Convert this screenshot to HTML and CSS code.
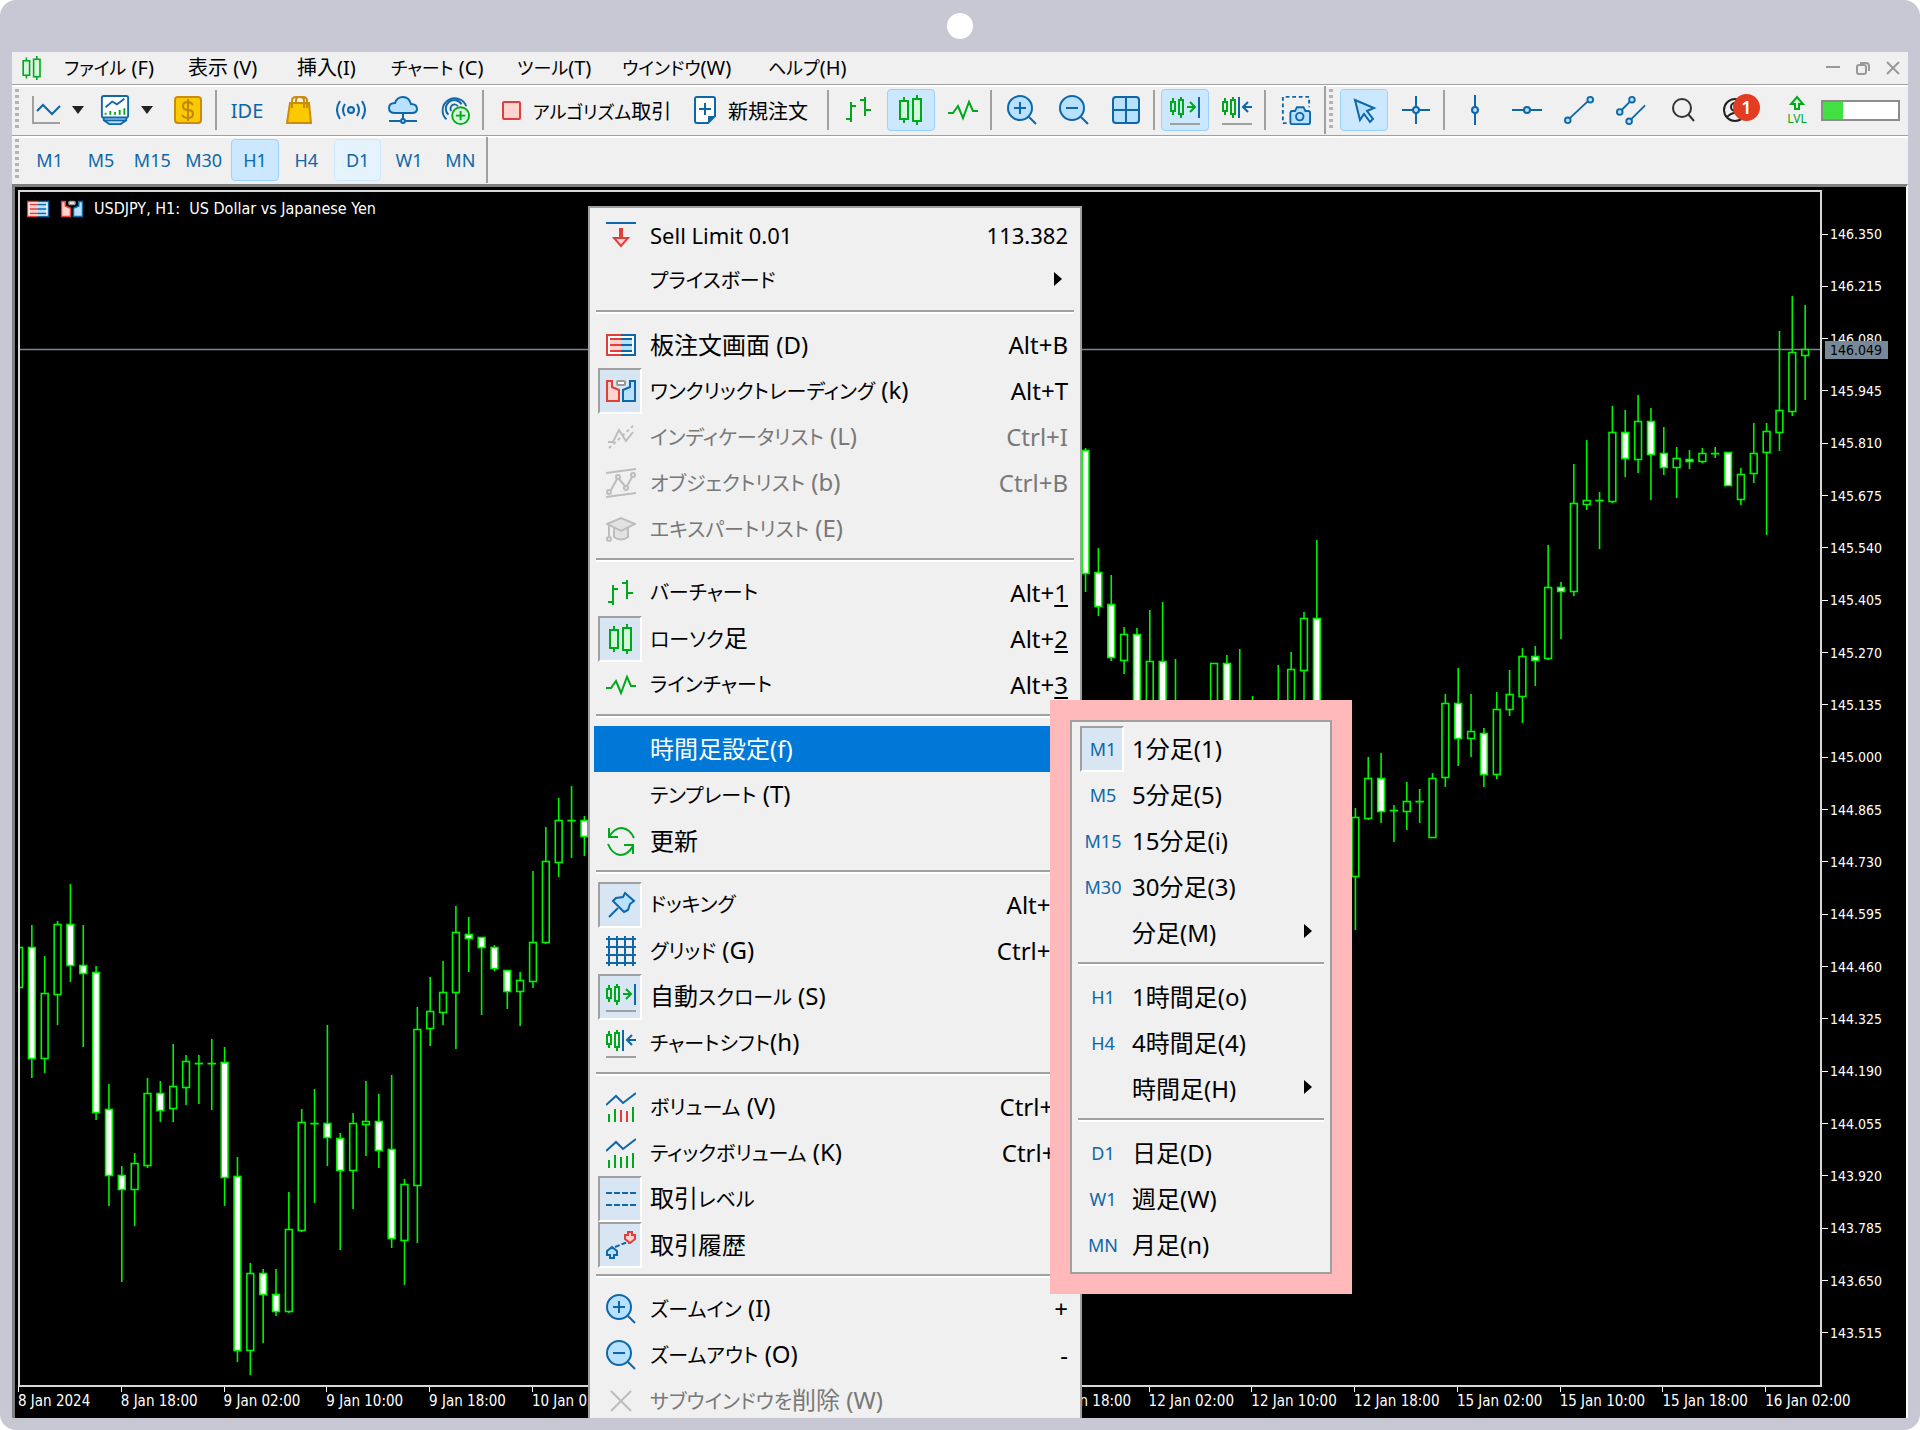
FILE: index.html
```html
<!DOCTYPE html>
<html lang="ja">
<head>
<meta charset="utf-8">
<title>USDJPY, H1</title>
<link rel="stylesheet" href="styles.css">
</head>
<body>
<svg class="sprite" aria-hidden="true">
  <defs>
    <symbol id="i-bars" viewBox="0 0 30 30"><path class="s-green" d="M2 24h6M7 27V7M7 11h5M16 5h6M21 2v19M21 15h6"/></symbol>
    <symbol id="i-candles" viewBox="0 0 30 30"><path class="s-green" d="M8 2v4M8 24v4M21 0v4M21 26v4"/><path class="s-green f-green" d="M4 6h8v18H4zM17 4h8v22h-8z"/></symbol>
    <symbol id="i-pulse" viewBox="0 0 30 30"><path class="s-green" d="M0 18h5l5-7 5 12 6-16 4 9h5"/></symbol>
    <symbol id="i-zoomin" viewBox="0 0 30 30"><circle class="s-blue f-blue" cx="13" cy="13" r="12"/><path class="s-blue" d="M13 7v12M7 13h12M22 22l7 7"/></symbol>
    <symbol id="i-zoomout" viewBox="0 0 30 30"><circle class="s-blue f-blue" cx="13" cy="13" r="12"/><path class="s-blue" d="M7 13h12M22 22l7 7"/></symbol>
    <symbol id="i-scroll" viewBox="0 0 30 30"><path class="s-green" d="M3 3v4M3 16v4M11 2v3M11 19v4M1 7h4v9H1zM9 5h4v14H9zM17 12h8M20 7l5 5-5 5"/><path class="s-blue" d="M29 2v21"/><path class="s-gray" d="M0 29h30"/></symbol>
    <symbol id="i-shift" viewBox="0 0 30 30"><path class="s-green" d="M3 3v4M3 16v4M11 2v3M11 19v4M1 7h4v9H1zM9 5h4v14H9z"/><path class="s-blue" d="M17 2v21M30 12h-8M26 7l-5 5 5 5"/><path class="s-gray" d="M0 29h30"/></symbol>
    <symbol id="i-dom" viewBox="0 0 30 24"><path class="s-red" fill="#fff" d="M15 2H1v20h14"/><path class="s-blue" fill="#fff" d="M15 2h14v20H15"/><path class="fill-red" d="M4 5h11v14H4z"/><path class="fill-blue" d="M15 5h11v14H15z"/><path class="s-red" d="M4 6h11M4 12h11M4 18h11"/><path class="s-blue" d="M15 6h11M15 12h11M15 18h11"/></symbol>
    <symbol id="i-oneclick" viewBox="0 0 30 24"><path class="s-red f-red" d="M1 2h5v6l7 3v11H1z"/><path class="s-blue f-blue" d="M29 2h-5v6l-7 3v11h12z"/><rect x="11" y="2" width="8" height="4" rx="1" fill="#fff" stroke="#999" stroke-width="2"/></symbol>
    <symbol id="i-selllimit" viewBox="0 0 30 28"><path class="s-blue" d="M0 2h30"/><path class="s-red f-red" d="M14 8h2v9h6l-7 8-7-8h6z"/></symbol>
    <symbol id="i-indi" viewBox="0 0 30 30"><path class="s-lgray" d="M2 20h5l6-12 7 11 7-9"/><path class="s-lgray" stroke-dasharray="3 3" d="M3 26L27 4"/></symbol>
    <symbol id="i-objects" viewBox="0 0 30 30"><path class="s-lgray" d="M0 5l30-4M0 29l30-4M5 22l6-11M13 11l6 7M21 18l5-9"/><g class="s-lgray"><circle cx="3" cy="24" r="2"/><circle cx="12" cy="9" r="2"/><circle cx="20" cy="20" r="2"/><circle cx="27" cy="7" r="2"/></g></symbol>
    <symbol id="i-expert" viewBox="0 0 30 30"><path class="s-lgray f-lgray" d="M8 13v10q7 5 14 0V13"/><path class="s-lgray f-lgray" d="M1 10l14-6 14 6-14 7z"/><path class="s-lgray" d="M3 11v13"/><circle class="s-lgray" cx="3" cy="25" r="2"/></symbol>
    <symbol id="i-refresh" viewBox="0 0 30 30"><path class="s-green" d="M3 11Q8 2 16 2q8 1 12 10M3 2v9h9M27 20q-5 9-13 9Q6 28 2 18M27 28v-9h-9"/></symbol>
    <symbol id="i-pin" viewBox="0 0 30 30"><path class="s-blue f-blue" d="M19 3l9 8-4 3-2 6-4 2-5-5-6-6 3-3 7-1z"/><path class="s-blue" d="M12 18L3 27"/></symbol>
    <symbol id="i-grid" viewBox="0 0 30 30"><path class="s-blue" d="M3 0v30M11 0v30M19 0v30M27 0v30M0 3h30M0 11h30M0 19h30M0 27h30"/></symbol>
    <symbol id="i-volume" viewBox="0 0 30 30"><path class="s-blue" d="M0 13l10-9 7 7L30 1"/><path class="s-green" d="M3 30v-8M9 30V17M27 30V15"/><path class="s-red" d="M15 30V18M21 30V19"/></symbol>
    <symbol id="i-tick" viewBox="0 0 30 30"><path class="s-blue" d="M0 13l10-9 7 7L30 1"/><path class="s-green" d="M3 30v-8M9 30V17M15 30V19M21 30V18M27 30V15"/></symbol>
    <symbol id="i-levels" viewBox="0 0 30 30"><path class="s-blue" stroke-dasharray="6 2" d="M0 9h30M0 21h30"/></symbol>
    <symbol id="i-history" viewBox="0 0 30 30"><path class="s-blue" stroke-dasharray="5 2" d="M9 17l10-4h4"/><path class="s-red f-red" d="M22 2h4v3h3v4l-5 4-5-4V5h3z"/><path class="s-blue f-blue" d="M6 17l5 4v4H8v3H4v-3H1v-4z"/></symbol>
    <symbol id="i-delete" viewBox="0 0 30 30"><path class="s-lgray" d="M5 5l20 20M25 5L5 25"/></symbol>
    <symbol id="i-line" viewBox="0 0 30 30"><path class="s-gray" d="M2 1v27h27"/><path class="s-blue" d="M6 16l6-6 9 9 8-8"/></symbol>
    <symbol id="i-template" viewBox="0 0 32 32"><path class="s-blue f-blue" d="M4 21v6l6 4h12l6-4v-6M4 27h24"/><rect x="2" y="1" width="28" height="23" rx="2" fill="#fff" class="s-blue"/><path class="s-blue" d="M6 13l7-6 5 3 8-6"/><path class="s-green" d="M6 21v-2M11 21v-4M16 21v-3M21 21v-5M26 21v-7"/></symbol>
    <symbol id="i-dollar" viewBox="0 0 30 30"><rect x="2" y="2" width="26" height="26" rx="3" fill="#fbc900" stroke="#c98d0c" stroke-width="2"/><path fill="none" stroke="#c0860a" stroke-width="2" d="M20 10q-2-3-5-3-5 0-5 4t5 4 5 4-5 4q-4 0-6-3M15 4v22"/></symbol>
    <symbol id="i-bag" viewBox="0 0 30 30"><path fill="#fbc900" stroke="#c98d0c" stroke-width="2" d="M6 8h19l2 20H3z"/><path fill="none" stroke="#c98d0c" stroke-width="2" d="M8 13V6q0-4 4-4h4q4 0 4 4v7M12 8V6q0-4 3-4M23 13V6q0-4-4-4h-3"/></symbol>
    <symbol id="i-signal" viewBox="0 0 30 30"><circle class="s-blue f-blue" cx="15" cy="15" r="3"/><path class="s-blue" d="M9 9q-4 6 0 12M21 9q4 6 0 12M4 6q-6 9 0 18M26 6q6 9 0 18"/></symbol>
    <symbol id="i-cloud" viewBox="0 0 30 30"><path class="s-blue f-blue" d="M7 18Q1 18 1 13t6-5q2-6 8-6t8 7q6 0 6 5 0 4-5 4z"/><path class="s-blue" d="M15 18v6M1 26h11M18 26h11"/><circle class="s-blue f-blue" cx="15" cy="26" r="2"/></symbol>
    <symbol id="i-vps" viewBox="0 0 32 32"><path class="s-blue" d="M7 26A13 13 0 1 1 28 12M9 21A9 9 0 1 1 23 10M12 17a4 4 0 1 1 7-5"/><circle class="s-green f-green" cx="22" cy="22" r="9"/><path class="s-green" d="M22 17v10M17 22h10"/></symbol>
    <symbol id="i-neworder" viewBox="0 0 22 28"><path class="s-blue" fill="#fff" d="M3 1h16q2 0 2 2v17l-7 7H3q-2 0-2-2V3q0-2 2-2z"/><path fill="#0e67a8" d="M14 27v-7h7z"/><path class="s-blue" d="M11 7v12M5 13h12"/></symbol>
    <symbol id="i-tile" viewBox="0 0 30 30"><rect class="s-blue f-blue" x="2" y="2" width="26" height="26" rx="3"/><path class="s-blue" d="M15 2v26M2 15h26"/></symbol>
    <symbol id="i-camera" viewBox="0 0 32 32"><path class="s-blue" stroke-dasharray="4 3" d="M6 30H2V2h28v11"/><path class="s-blue f-blue" d="M11 17h4l2-4h7l2 4h3q2 0 2 2v10q0 2-2 2H12q-2 0-2-2V19z"/><circle class="s-blue" cx="20" cy="23" r="4"/></symbol>
    <symbol id="i-cursor" viewBox="0 0 30 30"><path class="s-blue f-blue" d="M6 5l19 8-7 3 6 8-3 3-6-8-4 6z"/></symbol>
    <symbol id="i-cross" viewBox="0 0 30 30"><path class="s-blue" d="M15 1v11M15 18v11M1 15h11M18 15h11"/><circle class="s-blue f-blue" cx="15" cy="15" r="3"/></symbol>
    <symbol id="i-vline" viewBox="0 0 30 30"><path class="s-blue" d="M15 0v12M15 18v12"/><circle class="s-blue f-blue" cx="15" cy="15" r="3"/></symbol>
    <symbol id="i-hline" viewBox="0 0 30 30"><path class="s-blue" d="M0 15h12M18 15h12"/><circle class="s-blue f-blue" cx="15" cy="15" r="3"/></symbol>
    <symbol id="i-trend" viewBox="0 0 32 32"><path class="s-blue" d="M6 25L25 7"/><circle class="s-blue f-blue" cx="4" cy="27" r="3"/><circle class="s-blue f-blue" cx="28" cy="5" r="3"/></symbol>
    <symbol id="i-channel" viewBox="0 0 32 32"><path class="s-blue" d="M6 16L16 6M16 26l15-15"/><circle class="s-blue f-blue" cx="4" cy="18" r="3"/><circle class="s-blue f-blue" cx="17" cy="5" r="3"/><circle class="s-blue f-blue" cx="14" cy="28" r="3"/></symbol>
    <symbol id="i-search" viewBox="0 0 30 30"><g fill="none" stroke="#333" stroke-width="2"><circle cx="14" cy="13" r="9"/><path d="M20 19l6 7"/></g></symbol>
    <symbol id="i-person" viewBox="0 0 30 30"><g fill="none" stroke="#222" stroke-width="2"><circle cx="15" cy="15" r="11"/><circle cx="15" cy="12" r="4"/><path d="M7 22q8-8 16 0"/></g></symbol>
    <symbol id="i-level" viewBox="0 0 30 30"><path class="s-green f-green" d="M13 14V9H9l6-7 6 7h-4v5z"/></symbol>
  </defs>
</svg>

<div class="device">
  <div class="camera-bar"><span class="camera"></span></div>
  <main class="window">
    <nav class="menubar">
      <svg class="app-icon"><use href="#i-candles"/></svg>
      <div class="menus">
        <button><span class="kana">ファイル</span> (F)</button><button>表示 (V)</button><button>挿入(I)</button><button><span class="kana">チャート</span> (C)</button><button><span class="kana">ツール</span>(T)</button><button><span class="kana">ウインドウ</span>(W)</button><button><span class="kana">ヘルプ</span>(H)</button>
      </div>
      <div class="window-buttons">
        <button aria-label="最小化"><svg viewBox="0 0 14 14"><path d="M0 6h14"/></svg></button>
        <button aria-label="元に戻す"><svg viewBox="0 0 14 14"><rect x="1" y="4" width="9" height="9" rx="2"/><path d="M4 2h6q3 0 3 3v5"/></svg></button>
        <button aria-label="閉じる"><svg viewBox="0 0 14 14"><path d="M1 1l12 12M13 1L1 13"/></svg></button>
      </div>
    </nav>

    <div class="toolbar">
      <span class="grip"></span>
      <button class="drop" aria-label="チャート種別"><svg><use href="#i-line"/></svg><i class="caret"></i></button>
      <button class="drop" aria-label="テンプレート"><svg><use href="#i-template"/></svg><i class="caret"></i></button>
      <button class="tool" aria-label="気配値"><svg><use href="#i-dollar"/></svg></button>
      <span class="sep"></span>
      <button class="tool ide">IDE</button>
      <button class="tool" aria-label="マーケット"><svg><use href="#i-bag"/></svg></button>
      <button class="tool" aria-label="シグナル"><svg><use href="#i-signal"/></svg></button>
      <button class="tool" aria-label="クラウド"><svg><use href="#i-cloud"/></svg></button>
      <button class="tool" aria-label="VPS"><svg><use href="#i-vps"/></svg></button>
      <span class="sep"></span>
      <button class="wide algo"><i class="stop"></i><span><span class="kana">アルゴリズム</span>取引</span></button>
      <button class="wide order"><svg><use href="#i-neworder"/></svg>新規注文</button>
      <span class="sep"></span>
      <button class="tool" aria-label="バーチャート"><svg><use href="#i-bars"/></svg></button>
      <button class="tool on" aria-label="ローソク足"><svg><use href="#i-candles"/></svg></button>
      <button class="tool" aria-label="ラインチャート"><svg><use href="#i-pulse"/></svg></button>
      <span class="sep"></span>
      <button class="tool" aria-label="ズームイン"><svg><use href="#i-zoomin"/></svg></button>
      <button class="tool" aria-label="ズームアウト"><svg><use href="#i-zoomout"/></svg></button>
      <button class="tool" aria-label="並べて表示"><svg><use href="#i-tile"/></svg></button>
      <span class="sep"></span>
      <button class="tool on" aria-label="自動スクロール"><svg><use href="#i-scroll"/></svg></button>
      <button class="tool" aria-label="チャートシフト"><svg><use href="#i-shift"/></svg></button>
      <span class="sep"></span>
      <button class="tool" aria-label="スクリーンショット"><svg><use href="#i-camera"/></svg></button>
      <span class="edge"></span>
      <span class="grip"></span>
      <button class="tool on" aria-label="カーソル"><svg><use href="#i-cursor"/></svg></button>
      <button class="tool" aria-label="十字カーソル"><svg><use href="#i-cross"/></svg></button>
      <span class="sep"></span>
      <button class="tool" aria-label="垂直線"><svg><use href="#i-vline"/></svg></button>
      <button class="tool" aria-label="水平線"><svg><use href="#i-hline"/></svg></button>
      <button class="tool" aria-label="トレンドライン"><svg><use href="#i-trend"/></svg></button>
      <button class="tool" aria-label="チャネル"><svg><use href="#i-channel"/></svg></button>
      <button class="tool" aria-label="検索"><svg><use href="#i-search"/></svg></button>
      <button class="tool account" aria-label="アカウント"><svg><use href="#i-person"/></svg><span class="badge">1</span></button>
      <div class="status">
        <button class="level"><svg><use href="#i-level"/></svg>LVL</button>
        <span class="meter"><i></i></span>
      </div>
    </div>

    <div class="toolbar timeframes">
      <span class="grip"></span>
      <div class="periods">
        <button>M1</button><button>M5</button><button>M15</button><button>M30</button><button class="on">H1</button><button>H4</button><button class="hover">D1</button><button>W1</button><button>MN</button>
      </div>
    </div>

    <section class="chart">
      <div class="plot-row">
        <div class="plot">
          <svg class="candles" id="candles"></svg>
          <div class="plot-title">
            <svg viewBox="0 0 30 24"><use href="#i-dom"/></svg>
            <svg viewBox="0 0 30 24"><use href="#i-oneclick"/></svg>
            <span>USDJPY, H1:  US Dollar vs Japanese Yen</span>
          </div>
        </div>
        <div class="prices">
          <span>146.350</span><span>146.215</span><span>146.080</span><span>145.945</span><span>145.810</span><span>145.675</span><span>145.540</span><span>145.405</span><span>145.270</span><span>145.135</span><span>145.000</span><span>144.865</span><span>144.730</span><span>144.595</span><span>144.460</span><span>144.325</span><span>144.190</span><span>144.055</span><span>143.920</span><span>143.785</span><span>143.650</span><span>143.515</span>
          <b class="current">146.049</b>
        </div>
      </div>
      <div class="times">
        <span>8 Jan 2024</span><span>8 Jan 18:00</span><span>9 Jan 02:00</span><span>9 Jan 10:00</span><span>9 Jan 18:00</span><span>10 Jan 02:00</span><span></span><span></span><span></span><span></span><span>11 Jan 18:00</span><span>12 Jan 02:00</span><span>12 Jan 10:00</span><span>12 Jan 18:00</span><span>15 Jan 02:00</span><span>15 Jan 10:00</span><span>15 Jan 18:00</span><span>16 Jan 02:00</span>
      </div>

      <div class="menu context">
        <button class="pending"><i class="ico"><svg><use href="#i-selllimit"/></svg></i><span>Sell Limit 0.01</span><kbd>113.382</kbd></button>
        <button><i class="ico"></i><span class="kana">プライスボード</span><i class="more"></i></button>
        <hr>
        <button><i class="ico"><svg><use href="#i-dom"/></svg></i><span>板注文画面 (D)</span><kbd>Alt+B</kbd></button>
        <button><i class="ico checked"><svg><use href="#i-oneclick"/></svg></i><span><span class="kana">ワンクリックトレーディング</span> (k)</span><kbd>Alt+T</kbd></button>
        <button disabled><i class="ico"><svg><use href="#i-indi"/></svg></i><span><span class="kana">インディケータリスト</span> (L)</span><kbd>Ctrl+I</kbd></button>
        <button disabled><i class="ico"><svg><use href="#i-objects"/></svg></i><span><span class="kana">オブジェクトリスト</span> (b)</span><kbd>Ctrl+B</kbd></button>
        <button disabled><i class="ico"><svg><use href="#i-expert"/></svg></i><span><span class="kana">エキスパートリスト</span> (E)</span></button>
        <hr>
        <button><i class="ico"><svg><use href="#i-bars"/></svg></i><span class="kana">バーチャート</span><kbd>Alt+<u>1</u></kbd></button>
        <button><i class="ico checked"><svg><use href="#i-candles"/></svg></i><span><span class="kana">ローソク</span>足</span><kbd>Alt+<u>2</u></kbd></button>
        <button><i class="ico"><svg><use href="#i-pulse"/></svg></i><span class="kana">ラインチャート</span><kbd>Alt+<u>3</u></kbd></button>
        <hr>
        <button class="selected"><i class="ico"></i><span>時間足設定(f)</span></button>
        <button><i class="ico"></i><span><span class="kana">テンプレート</span> (T)</span></button>
        <button><i class="ico"><svg><use href="#i-refresh"/></svg></i><span>更新</span></button>
        <hr>
        <button><i class="ico checked"><svg><use href="#i-pin"/></svg></i><span class="kana">ドッキング</span><kbd>Alt+D</kbd></button>
        <button><i class="ico"><svg><use href="#i-grid"/></svg></i><span><span class="kana">グリッド</span> (G)</span><kbd>Ctrl+G</kbd></button>
        <button><i class="ico checked"><svg><use href="#i-scroll"/></svg></i><span>自動<span class="kana">スクロール</span> (S)</span></button>
        <button><i class="ico"><svg><use href="#i-shift"/></svg></i><span><span class="kana">チャートシフト</span>(h)</span></button>
        <hr>
        <button><i class="ico"><svg><use href="#i-volume"/></svg></i><span><span class="kana">ボリューム</span> (V)</span><kbd>Ctrl+K</kbd></button>
        <button><i class="ico"><svg><use href="#i-tick"/></svg></i><span><span class="kana">ティックボリューム</span> (K)</span><kbd>Ctrl+L</kbd></button>
        <button><i class="ico checked"><svg><use href="#i-levels"/></svg></i><span>取引<span class="kana">レベル</span></span></button>
        <button><i class="ico checked"><svg><use href="#i-history"/></svg></i><span>取引履歴</span></button>
        <hr>
        <button><i class="ico"><svg><use href="#i-zoomin"/></svg></i><span><span class="kana">ズームイン</span> (I)</span><kbd>+</kbd></button>
        <button><i class="ico"><svg><use href="#i-zoomout"/></svg></i><span><span class="kana">ズームアウト</span> (O)</span><kbd>-</kbd></button>
        <button disabled><i class="ico"><svg><use href="#i-delete"/></svg></i><span><span class="kana">サブウインドウを</span>削除 (W)</span></button>
      </div>

      <div class="highlight">
        <div class="menu">
          <button><i class="ico checked">M1</i><span>1分足(1)</span></button>
          <button><i class="ico">M5</i><span>5分足(5)</span></button>
          <button><i class="ico">M15</i><span>15分足(i)</span></button>
          <button><i class="ico">M30</i><span>30分足(3)</span></button>
          <button><i class="ico"></i><span>分足(M)</span><i class="more"></i></button>
          <hr>
          <button><i class="ico">H1</i><span>1時間足(o)</span></button>
          <button><i class="ico">H4</i><span>4時間足(4)</span></button>
          <button><i class="ico"></i><span>時間足(H)</span><i class="more"></i></button>
          <hr>
          <button><i class="ico">D1</i><span>日足(D)</span></button>
          <button><i class="ico">W1</i><span>週足(W)</span></button>
          <button><i class="ico">MN</i><span>月足(n)</span></button>
        </div>
      </div>
    </section>
  </main>
</div>
<script src="chart.js"></script>
</body>
</html>
```
FILE: styles.css
```css
* { box-sizing: border-box; }
body {
  margin: 0;
  min-height: 100vh;
  display: flex;
  background: #fff;
  font-family: "Noto Sans", "Noto Sans CJK JP", sans-serif;
  font-feature-settings: "palt";
  color: #000;
}
button {
  border: 0;
  padding: 0;
  margin: 0;
  background: none;
  font: inherit;
  font-feature-settings: inherit;
  color: inherit;
  white-space: nowrap;
}
.sprite { position: absolute; width: 0; height: 0; }
.s-blue, .s-green, .s-red, .s-gray, .s-lgray { stroke-width: 2; }
.s-blue { stroke: #0e67a8; }
.s-green { stroke: #00a81c; }
.s-red { stroke: #e0403a; }
.s-gray { stroke: #a0a0a0; }
.s-lgray { stroke: #bdbdbd; }
symbol path, symbol circle, symbol g { fill: none; }
symbol .f-blue, symbol .fill-blue { fill: #b8e1ff; }
symbol .f-green { fill: #d3f8da; }
symbol .f-red, symbol .fill-red { fill: #ffd3cf; }
symbol .f-lgray { fill: #e2e2e2; }
symbol path[fill="#fbc900"] { fill: #fbc900; }
symbol path[fill="#0e67a8"] { fill: #0e67a8; }
symbol path[fill="#fff"] { fill: #fff; }

.device {
  flex: 1;
  display: flex;
  flex-direction: column;
  padding: 0 12px 12px;
  background: #c8c8d5;
  border-radius: 16px;
}
.camera-bar {
  height: 52px;
  display: flex;
  justify-content: center;
  align-items: center;
}
.camera { width: 26px; height: 26px; border-radius: 50%; background: #fff; }
.window { flex: 1; display: flex; flex-direction: column; background: #f0f0f0; }

/* menu bar */
.menubar {
  display: flex;
  align-items: center;
  height: 32px;
  padding: 0 8px;
  font-size: 20px;
  line-height: 32px;
}
.menubar .kana, .toolbar .kana { font-size: 18px; }
.app-icon { width: 24px; height: 28px; margin-right: 20px; }
.menus {
  display: grid;
  grid-template-columns: 124px 109px 94px 126px 105px 146px auto;
  justify-items: start;
}
.window-buttons { margin-left: auto; display: flex; gap: 16px; }
.window-buttons svg {
  display: block;
  width: 14px;
  height: 14px;
  fill: none;
  stroke: #999;
  stroke-width: 2;
}

/* toolbars */
.toolbar {
  display: flex;
  align-items: center;
  height: 51px;
  border-top: 1px solid #a0a0a0;
  box-shadow: inset 0 2px #fff;
  font-size: 20px;
  color: #0e67a8;
}
.timeframes { height: 49px; }
.grip {
  width: 4px;
  height: 42px;
  margin: 0 5px 0 3px;
  background: repeating-linear-gradient(#b4b4b4 0 3px, transparent 3px 6px);
}
.toolbar svg { width: 30px; height: 30px; }
.drop { display: flex; align-items: center; width: 69px; padding-left: 7px; }
.caret {
  margin-left: 11px;
  border: 6px solid transparent;
  border-top: 8px solid #222;
  border-bottom: 0;
}
.tool {
  display: flex;
  align-items: center;
  justify-content: center;
  width: 48px;
  height: 42px;
  margin: 0 2px;
  border: 1px solid transparent;
  border-radius: 4px;
}
.on { background: #cce8ff; border: 1px solid #99d1ff; border-radius: 4px; }
.hover { background: #e5f3ff; border: 1px solid #cce8ff; border-radius: 4px; }
.sep { width: 2px; height: 40px; margin: 0 4px 0 1px; background: #a0a0a0; }
.wide {
  display: flex;
  align-items: center;
  gap: 12px;
  padding-left: 14px;
  color: #000;
}
.algo { width: 192px; }
.order { width: 146px; }
.toolbar .order svg { width: 22px; height: 28px; }
.stop { width: 19px; height: 19px; border: 2px solid #e0403a; border-radius: 2px; background: #ffd3cf; }
.edge { width: 2px; height: 48px; margin-left: 2px; background: #a0a0a0; }
.account { position: relative; }
.badge {
  position: absolute;
  left: 21px;
  top: 4px;
  width: 27px;
  height: 27px;
  border-radius: 50%;
  background: #e23c22;
  color: #fff;
  font-size: 18px;
  font-weight: 600;
  line-height: 27px;
  text-align: center;
}
.status { display: flex; align-items: center; margin-left: auto; padding-right: 8px; }
.level {
  display: flex;
  flex-direction: column;
  align-items: center;
  width: 48px;
  color: #00a81c;
  font-size: 12px;
  line-height: 12px;
}
.toolbar .level svg { width: 30px; height: 30px; margin-bottom: -12px; }
.meter { width: 79px; height: 21px; padding: 0; border: 2px solid #8c8c8c; background: #fff; }
.meter i { display: block; width: 20px; height: 17px; background: #43e043; }
.periods {
  display: grid;
  grid-template-columns: repeat(9, 1fr);
  width: 464px;
  height: 46px;
  padding: 2px 0;
  border-right: 2px solid #a0a0a0;
  font-size: 18px;
}
.periods button { margin: 0 2px; }

/* chart */
.chart {
  position: relative;
  flex: 1;
  display: flex;
  flex-direction: column;
  overflow: hidden;
  border: solid #808080;
  border-width: 3px 2px 0 3px;
  border-right-color: #fff;
  padding: 3px 0 0 3px;
  background: #000;
  color: #fff;
  font-family: "DejaVu Sans Condensed", "DejaVu Sans", sans-serif;
  font-stretch: condensed;
  font-size: 14px;
  line-height: 18px;
}
.plot-row { flex: 1; display: flex; }
.plot { position: relative; flex: 1; border: 2px solid #d8d8d8; }
.candles { position: absolute; inset: 0; width: 100%; height: 100%; }
.plot-title {
  position: relative;
  display: flex;
  align-items: center;
  gap: 10px;
  padding: 8px 6px;
  font-size: 16px;
  white-space: pre;
}
.plot-title svg { width: 24px; height: 18px; }
.prices {
  position: relative;
  width: 84px;
  padding: 35px 0 45px;
  display: flex;
  flex-direction: column;
  justify-content: space-between;
}
.prices span { display: flex; align-items: center; gap: 2px; }
.prices span::before { content: ""; width: 6px; height: 1px; background: #fff; }
.current {
  position: absolute;
  left: 3px;
  top: 151px;
  width: 63px;
  padding-left: 5px;
  background: #778899;
  color: #000;
  font-weight: normal;
}
.times {
  display: grid;
  grid-template-columns: repeat(18, 1fr);
  height: 31px;
  margin-right: 38px;
  font-size: 15px;
}
.times span { white-space: nowrap; }
.times span::before { content: ""; display: block; width: 1px; height: 5px; background: #fff; }

/* popup menus */
.menu {
  border: 2px solid #a0a0a0;
  padding: 4px;
  background: #f0f0f0;
  color: #000;
  font-family: "Noto Sans", "Noto Sans CJK JP", sans-serif;
  font-stretch: normal;
  font-size: 24px;
  line-height: 46px;
}
.menu button { display: flex; align-items: center; width: 100%; height: 46px; padding: 0 8px 0 4px; }
.menu button:disabled { color: #787878; }
.menu .kana { font-size: 20px; }
.menu .pending { font-size: 22px; }
.menu .selected { background: #0078d7; color: #fff; }
.menu hr { margin: 6px 2px 8px; height: 4px; border: 0; border-top: 2px solid #a0a0a0; background: #fff; }
.menu kbd { margin-left: auto; font: inherit; }
.menu u { text-underline-offset: 3px; }
.ico {
  display: flex;
  align-items: center;
  justify-content: center;
  width: 44px;
  height: 46px;
  margin-right: 8px;
  padding-left: 2px;
  border: 2px solid transparent;
  color: #0e67a8;
  font-size: 18px;
  font-style: normal;
}
.ico svg { width: 30px; height: 30px; }
.checked { background: #d8e6f3; border-color: #a0a0a0 #fff #fff #a0a0a0; }
.more {
  margin: 0 6px 4px auto;
  border: 7px solid transparent;
  border-left: 8px solid #000;
  border-right: 0;
}
.context { position: absolute; left: 573px; top: 19px; width: 494px; }
.highlight {
  position: absolute;
  left: 1035px;
  top: 513px;
  width: 302px;
  padding: 20px;
  background: #ffb9ba;
}
```
FILE: chart.js
```js
// Each row: bar index, high, body top, body bottom, low, 1 when the bar closed lower.
const bars = [
[0,947,947,987,987,0],[1,925,947,1058,1078,1],[2,956,993,1058,1073,0],[3,921,924,994,1025,0],[4,884,924,965,982,1],
[5,925,965,973,1047,1],[6,966,972,1112,1120,1],[7,1084,1109,1175,1206,1],[8,1166,1175,1189,1282,1],[9,1153,1163,1189,1226,0],
[10,1078,1093,1165,1168,0],[11,1081,1093,1110,1122,1],[12,1044,1086,1108,1122,0],[13,1055,1061,1087,1105,0],[14,1055,1063,1063,1104,0],
[15,1039,1063,1063,1110,0],[16,1047,1062,1177,1206,1],[17,1157,1176,1350,1362,1],[18,1263,1273,1350,1375,0],[19,1269,1273,1294,1343,1],
[20,1269,1294,1311,1316,1],[21,1192,1229,1311,1313,0],[22,1109,1122,1230,1232,0],[23,1089,1123,1123,1203,0],[24,1025,1123,1137,1166,1],
[25,1133,1138,1170,1250,1],[26,1113,1123,1170,1209,0],[27,1081,1121,1124,1156,0],[28,1094,1121,1150,1168,1],[29,1075,1149,1238,1248,1],
[30,1179,1184,1240,1285,0],[31,1007,1029,1185,1243,0],[32,977,1011,1028,1046,0],[33,961,992,1012,1025,0],[34,906,932,992,1049,0],
[35,917,934,938,972,1],[36,937,937,947,1015,1],[37,945,947,968,971,1],[38,970,970,991,1009,1],[39,972,980,991,1026,0],
[40,871,942,981,988,0],[41,827,861,942,944,0],[42,798,820,862,877,0],[43,786,820,820,858,0],[44,816,820,836,856,1],
[83,448,450,573,592,1],[84,548,572,606,616,1],[85,575,604,657,661,1],[86,627,634,660,674,0],[87,628,634,740,740,1],
[88,610,661,740,740,0],[89,602,661,740,740,1],[90,659,740,740,740,0],[93,663,663,740,740,0],[94,655,663,740,740,1],
[95,649,740,740,740,0],[96,696,740,740,740,0],[98,665,740,740,740,0],[99,652,669,740,740,0],[100,612,618,670,740,0],
[101,540,618,740,740,1],[104,808,817,876,930,0],[105,757,778,818,820,0],[106,753,778,811,823,1],[107,805,810,810,842,0],
[108,782,801,811,830,0],[109,789,801,801,823,0],[110,773,778,837,838,0],[111,694,703,777,787,0],[112,668,703,738,766,1],
[113,694,731,738,757,0],[114,728,733,774,787,1],[115,692,709,774,779,0],[116,670,694,709,716,0],[117,648,656,696,723,0],
[118,646,656,660,686,1],[119,545,587,658,660,0],[120,582,587,591,639,1],[121,464,503,591,596,0],[122,440,500,504,510,0],
[123,492,500,500,549,0],[124,406,432,501,503,0],[125,410,432,458,477,1],[126,395,421,459,473,0],[127,408,421,454,500,1],
[128,427,453,467,475,1],[129,447,458,467,498,0],[130,450,459,461,469,1],[131,448,453,461,463,0],[132,447,453,453,458,0],
[133,452,452,485,485,1],[134,468,474,499,505,0],[135,423,453,473,483,0],[136,423,431,452,535,0],[137,331,410,432,451,0],
[138,296,352,411,416,0],[139,305,349,355,400,0]
];
const STEP = 12.85;
const TOP = 192;
const svg = document.getElementById("candles");
const parts = ['<path d="M0 157.5H4000" stroke="#778899" stroke-width="1.4"/>'];
for (const [i, high, top, bottom, low, down] of bars) {
  const x = i * STEP - 1;
  const t = top - TOP + 0.5;
  const b = bottom - TOP + 0.5;
  parts.push(
    `<g stroke="#00f400" stroke-width="1.6" fill="${down ? "#fff" : "#000"}">` +
    `<path d="M${x} ${high - TOP}V${low - TOP}"/>` +
    `<rect x="${x - 3.4}" y="${t}" width="6.8" height="${Math.max(b - t, 0.2)}"/></g>`
  );
}
svg.innerHTML = parts.join("");
```
